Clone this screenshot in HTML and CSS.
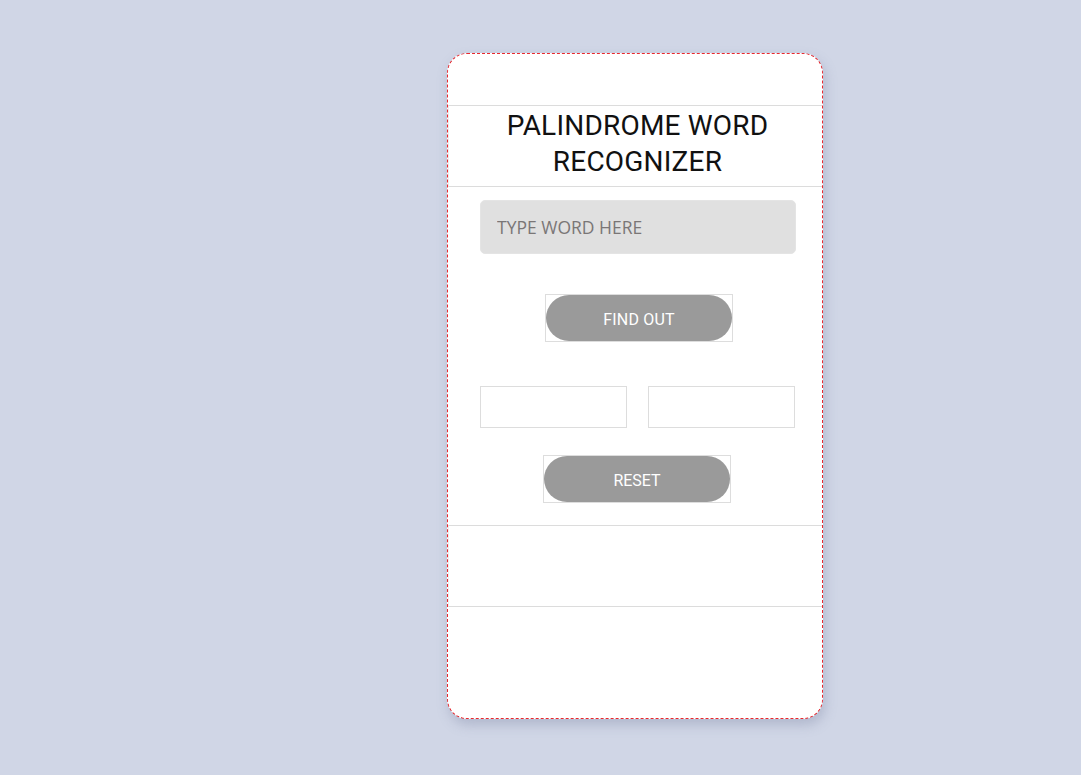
FILE: index.html
```html
<!DOCTYPE html>
<html>
<head>
<meta charset="utf-8">
<link rel="stylesheet" href="styles.css">
</head>
<body>
<div class="stage">
  <div class="card">
    <div class="top-space"></div>
    <header class="title-bar">
      <h1 class="title">PALINDROME WORD<br>RECOGNIZER</h1>
    </header>
    <main class="content">
      <input class="word-input" type="text" placeholder="TYPE WORD HERE">
      <div class="btn-wrap find-wrap"><button class="pill-btn find-btn">FIND OUT</button></div>
      <div class="result-row">
        <div class="result-box"></div>
        <div class="result-box"></div>
      </div>
      <div class="btn-wrap reset-wrap"><button class="pill-btn reset-btn">RESET</button></div>
    </main>
    <footer class="footer-bar"></footer>
  </div>
</div>
</body>
</html>
```
FILE: styles.css
```css
* { box-sizing: border-box; }
html, body { margin: 0; padding: 0; }
body {
  background: #d0d6e6;
  width: 1081px;
  height: 775px;
  overflow: hidden;
  font-family: Roboto, "Liberation Sans", sans-serif;
}
.stage {
  display: flex;
  padding: 53px 0 0 447px;
}
.card {
  width: 376px;
  height: 666px;
  background: #fff;
  border: 1px dashed #e8282e;
  border-radius: 20px;
  box-shadow: 2px 6px 12px rgba(120, 130, 160, 0.35);
  display: flex;
  flex-direction: column;
  overflow: hidden;
}
.top-space { height: 51px; flex: none; }
.title-bar {
  height: 82px;
  flex: none;
  border-top: 1px solid #dcdcdc;
  border-bottom: 1px solid #dcdcdc;
  border-left: 1px solid #eeeeee;
  display: flex;
  align-items: center;
  justify-content: center;
  padding-bottom: 4px;
}
.title {
  margin: 0;
  font-weight: 400;
  font-size: 28px;
  line-height: 36px;
  text-align: center;
  color: #111;
  letter-spacing: 0.2px;
  padding-left: 4px;
}
.content {
  display: flex;
  flex-direction: column;
  align-items: center;
  padding: 13px 25px 0 31px;
  height: 338px;
  flex: none;
}
.word-input {
  width: 316px;
  height: 54px;
  border: 1px solid #e4e4e4;
  border-radius: 5px;
  background: #e0e0e0;
  padding: 0 16px;
  font-family: "Open Sans", sans-serif;
  font-size: 17.5px;
  color: #333;
  outline: none;
}
.word-input::placeholder { color: #7a7676; }
.btn-wrap {
  width: 188px;
  height: 48px;
  border: 1px solid #dddddd;
  display: flex;
}
.find-wrap { margin-top: 40px; margin-left: 2px; }
.reset-wrap { margin-top: 27px; margin-right: 2px; }
.pill-btn {
  flex: 1;
  border: none;
  border-radius: 24px;
  background: #9a9a9a;
  color: #fff;
  font-family: Roboto, sans-serif;
  font-size: 16px;
  padding: 2px 0 0 0;
}
.find-btn { letter-spacing: 0.2px; }
.result-row {
  margin-top: 44px;
  width: 316px;
  display: flex;
  justify-content: space-between;
  padding-right: 1px;
}
.result-box {
  width: 147px;
  height: 42px;
  border: 1px solid #dddddd;
}
.footer-bar {
  height: 82px;
  flex: none;
  border-top: 1px solid #dcdcdc;
  border-bottom: 1px solid #dcdcdc;
  border-left: 1px solid #eeeeee;
}
```
